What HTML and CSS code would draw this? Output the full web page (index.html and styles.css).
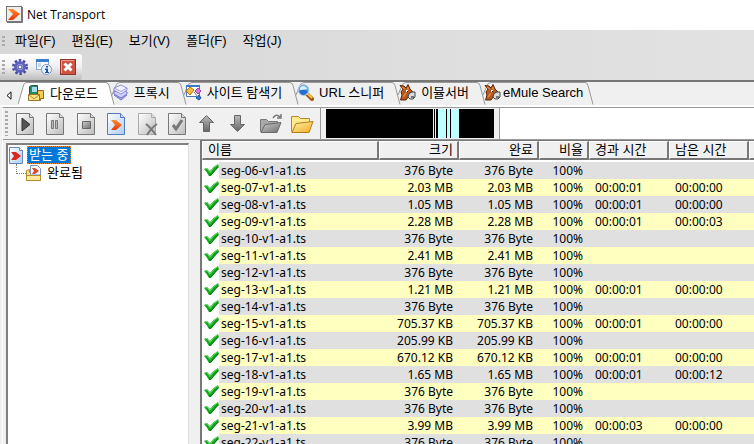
FILE: index.html
```
<!DOCTYPE html>
<html lang="ko">
<head>
<meta charset="utf-8">
<title>Net Transport</title>
<link rel="stylesheet" href="styles.css">
</head>
<body>
<svg class="defs" aria-hidden="true">
  <defs>
    <linearGradient id="pg" x1="0" y1="0" x2="1" y2="1"><stop offset="0" stop-color="#fff"/><stop offset="1" stop-color="#bcbcbc"/></linearGradient>
    <linearGradient id="pb" x1="0" y1="0" x2="1" y2="1"><stop offset="0" stop-color="#fff"/><stop offset="1" stop-color="#a9cdf8"/></linearGradient>
    <linearGradient id="dk" x1="0" y1="0" x2="0" y2="1"><stop offset="0" stop-color="#bbb"/><stop offset="1" stop-color="#666"/></linearGradient>
    <linearGradient id="or" x1="0" y1="0" x2="0" y2="1"><stop offset="0" stop-color="#ff8a2c"/><stop offset="1" stop-color="#e33a08"/></linearGradient>
    <linearGradient id="ye" x1="0" y1="0" x2="1" y2="1"><stop offset="0" stop-color="#fff3a8"/><stop offset="1" stop-color="#efad27"/></linearGradient>
    <linearGradient id="gy" x1="0" y1="0" x2="1" y2="1"><stop offset="0" stop-color="#ccc"/><stop offset="1" stop-color="#707070"/></linearGradient>
    <symbol id="page" viewBox="0 0 18 24"><path d="M.5 1.500h13l4 4v17H.5z" fill="url(#pg)" stroke="#777"/><path d="M13.500 1.500v4h4" fill="#ddd" stroke="#777"/></symbol>
    <symbol id="check" viewBox="0 0 15 14"><path d="M0 6q2-1 3-1l3 3q4-5 8-7l1 3q-5 4-8 9H5Q3 9 0 6z" fill="#10a71b"/><path d="M1 6l2-.5 3 4q4-6 8-8" fill="none" stroke="#66dc63"/><path d="M5 12h2l7-8" fill="none" stroke="#087b13"/></symbol>
    <symbol id="mule" viewBox="0 0 17 17"><path d="M1 1.500l4 .5 2 2 2-3.500 2 4.500 3 3v3l-4 1-3 4H1.500l1.500-5-1-3 2-3z" fill="#b5581f" stroke="#5a260d"/><path d="M3 3l3 2M4 13l3-4M9 3v3" stroke="#e58637" stroke-width="1.500"/><path d="M10 9.500l3-1.500h3v5l-2 2h-3l-2-2z" fill="#d9dde0" stroke="#444"/><path d="M7 6h2v2H7z" fill="#fff"/><path d="M8.500 7v1M12 13h3" stroke="#111"/></symbol>
    <symbol id="sep" viewBox="0 0 15 23"><path d="M0 .5q2 0 3 3l5 19M14 .5q-3 0-4 3L6 13" fill="none" stroke="#989898"/></symbol>
  </defs>
</svg>

<header class="title">
  <svg width="17" height="17" viewBox="0 0 17 17"><rect x=".5" y=".5" width="15" height="15" fill="#eee" stroke="#777"/><path d="M16.500 1v15.500H1" fill="none" stroke="#777"/><path d="M2 3h5l7 5-7 6H2l5-6z" fill="url(#or)"/></svg>
  <h1>Net Transport</h1>
</header>

<div class="bars">
  <nav class="menu">
    <span class="grip"></span>
    <button>파일(F)</button><button>편집(E)</button><button>보기(V)</button><button>폴더(F)</button><button>작업(J)</button>
  </nav>
  <div class="quick">
    <span class="grip"></span>
    <button aria-label="설정"><svg width="16" height="16" viewBox="0 0 16 16"><circle cx="8" cy="8" r="6.500" fill="none" stroke="#484ca5" stroke-width="3" stroke-dasharray="2.300 1.800"/><circle cx="8" cy="8" r="4.500" fill="#b9c0f2" stroke="#5d62bd" stroke-width="3"/><circle cx="8" cy="8" r="2" fill="#f3f3f3" stroke="#434799"/></svg></button>
    <button aria-label="정보"><svg width="16" height="16" viewBox="0 0 16 16"><rect x=".5" y=".5" width="12" height="10" fill="#f5f9ff" stroke="#87a5cb"/><path d="M0 0h13v3H0z" fill="#3c7fce"/><path d="M2 5h3M2 7h3" stroke="#9bb4d3"/><circle cx="10.500" cy="10.500" r="5" fill="#e9f3ff" stroke="#7997bd"/><path d="M10 7h2v1.500h-2zM9 9.500h3V13h1v1H9v-1h1v-2H9z" fill="#1550b4"/></svg></button>
    <button aria-label="닫기"><svg width="16" height="16" viewBox="0 0 16 16"><rect x=".5" y=".5" width="15" height="15" fill="#cf5341" stroke="#913326"/><path d="M1.500 14V1.500H14" fill="none" stroke="#ed9f92"/><path d="M4.500 4.500l7 7M11.500 4.500l-7 7" stroke="#fff" stroke-width="3"/></svg></button>
  </div>
</div>

<nav class="tabs">
  <button class="back" aria-label="이전 탭"><svg width="6" height="9" viewBox="0 0 6 9"><path d="M5 .8v7.400L1 4.500z" fill="#fff" stroke="#111"/></svg></button>
  <svg class="lead" width="8" height="23" viewBox="0 0 8 23"><path d="M0 22.500L5 5Q6 .5 8 .5V23H0z" fill="#fff"/><path d="M0 22.500L5 5Q6 .5 8 .5" fill="none" stroke="#989898"/></svg>
  <button class="tab active"><svg width="17" height="17" viewBox="0 0 17 17"><path d="M8.500 5.500h7v8h-3v2h-5z" fill="#f6c94e" stroke="#8e681d"/><path d="M1.500 1.500l2-1h6v9h-8z" fill="#278c59" stroke="#195e43"/><path d="M4 2h5v5H4z" fill="#a7d8ef"/><path d="M.5 9.500h11v6H.5z" fill="#fce184" stroke="#9a742c"/><path d="M1 10l5 4 5-4" fill="none" stroke="#b28931"/></svg>다운로드</button>
  <svg class="sep on" width="15" height="23" viewBox="0 0 15 23"><path d="M0 .5q2 0 3 3l5 19H0z" fill="#fff"/><use href="#sep"/></svg>
  <button class="tab"><svg width="16" height="17" viewBox="0 0 16 17"><path d="M1 11l7-3 6 3-6 5z" fill="#a9abe7" stroke="#7476c9"/><path d="M1 8l7-3 6 3v2l-6 4-7-4z" fill="#cfd0ff" stroke="#7779cd"/><path d="M1 4l7-3 6 3v2L8 10 1 6z" fill="#f2f2ff" stroke="#8e90d7"/><path d="M1 4l7 3.500L14 4" fill="none" stroke="#9b9dde"/></svg>프록시</button>
  <svg class="sep" width="15" height="23"><use href="#sep"/></svg>
  <button class="tab"><svg width="17" height="17" viewBox="0 0 17 17"><path d="M1.500 1.500h13v11h-13z" fill="#fff" stroke="#4776b7"/><path d="M1 1h14v2H1z" fill="#3b79ca"/><path d="M1 7l4-4 4 3-4 5z" fill="#f8bd38" stroke="#af7716"/><path d="M10 7l3-3 3 3-3 3z" fill="#de72df" stroke="#a542a9"/><path d="M11 14l3-3 2 3-2 2z" fill="#2f79cf" stroke="#1d55a0"/><path d="M9 8l4 5" stroke="#777"/></svg>사이트 탐색기</button>
  <svg class="sep" width="15" height="23"><use href="#sep"/></svg>
  <button class="tab"><svg width="17" height="17" viewBox="0 0 17 17"><path d="M10 10l5 5" stroke="#a15a0a" stroke-width="4" stroke-linecap="round"/><path d="M10 9l5 5" stroke="#ffc348" stroke-width="2"/><circle cx="6.500" cy="6" r="5.500" fill="#65a9ed" stroke="#bccbe2"/><path d="M3 6a3.500 3.500 0 0 1 3-4q3 0 4 3z" fill="#d8f2ff"/><path d="M2 7q4-2 9 0-2 4-5 4-3-1-4-4z" fill="#246cd0"/></svg>URL 스니퍼</button>
  <svg class="sep" width="15" height="23"><use href="#sep"/></svg>
  <button class="tab"><svg width="17" height="17"><use href="#mule"/></svg>이뮬서버</button>
  <svg class="sep" width="15" height="23"><use href="#sep"/></svg>
  <button class="tab last"><svg width="17" height="17"><use href="#mule"/></svg>eMule Search</button>
  <svg class="sep" width="15" height="23" viewBox="0 0 15 23"><path d="M0 .5q2 0 3 3l5 19" fill="none" stroke="#989898"/></svg>
</nav>

<main class="frame">
  <div class="tools">
    <div class="buttons">
      <span class="grip"></span>
      <button aria-label="시작"><svg width="18" height="24" viewBox="0 0 18 24"><use href="#page"/><path d="M6 6v13l8-6.500z" fill="#555" stroke="#333"/></svg></button>
      <button aria-label="일시 정지"><svg width="18" height="24" viewBox="0 0 18 24"><use href="#page"/><path d="M5.500 8.500h2v8h-2zM9.500 8.500h2v8h-2z" fill="#bbb" stroke="#777"/></svg></button>
      <button aria-label="정지"><svg width="18" height="24" viewBox="0 0 18 24"><use href="#page"/><path d="M5.500 9.500h8v7h-8z" fill="url(#gy)" stroke="#666"/></svg></button>
      <button aria-label="새 작업"><svg width="18" height="24" viewBox="0 0 18 24"><path d="M.5 1.500h13l4 4v17H.5z" fill="url(#pb)" stroke="#5579bd"/><path d="M13.500 1.500v4h4" fill="#c5dcff" stroke="#5579bd"/><path d="M4 8h5l6 5-6 5H4l4-5z" fill="url(#or)"/></svg></button>
      <button aria-label="삭제"><svg width="20" height="24" viewBox="0 0 20 24"><path d="M.5 1.500h13l4 4v17H.5z" fill="url(#pg)" stroke="#aaa"/><path d="M13.500 1.500v4h4" fill="#ddd" stroke="#aaa"/><path d="M8 12q4 3 10 11M19 12q-5 3-10 11" fill="none" stroke="#777" stroke-width="2"/></svg></button>
      <button aria-label="완료"><svg width="18" height="24" viewBox="0 0 18 24"><use href="#page"/><path d="M5 13l3 4 6-9" fill="none" stroke="#777" stroke-width="3"/></svg></button>
      <button aria-label="위로"><svg width="17" height="20" viewBox="0 0 17 20"><path d="M8.500 1.500l7 7h-4v9h-6v-9h-4z" fill="url(#dk)" stroke="#666"/></svg></button>
      <button aria-label="아래로"><svg width="17" height="20" viewBox="0 0 17 20"><path d="M8.500 17.500l7-7h-4v-9h-6v9h-4z" fill="url(#dk)" stroke="#666"/></svg></button>
      <button aria-label="폴더로 이동"><svg width="24" height="22" viewBox="0 0 24 22"><path d="M1.500 18.500v-12h6l2 2h9v10z" fill="#aaa" stroke="#777"/><path d="M2 19.500l4-8 16-2-4 10z" fill="url(#gy)" stroke="#696969"/><path d="M14 5q3-5 7-1M18 5h4V1" fill="none" stroke="#777" stroke-width="1.500"/></svg></button>
      <button aria-label="폴더 열기"><svg width="24" height="22" viewBox="0 0 24 22"><path d="M1.500 18.500V3.500h7l2 2h9v13z" fill="#ffe98e" stroke="#b98a29"/><path d="M2 19.500l4-9 17-2-4 11z" fill="url(#ye)" stroke="#b77c18"/></svg></button>
    </div>
    <svg class="graph" width="168" height="29" viewBox="0 0 168 29" shape-rendering="crispEdges" role="img" aria-label="전송 그래프"><path d="M0 0h168v29H0z"/><path d="M107 0h1v29h-1zM109 0h1v29h-1zM112 0h8v29h-8zM121 0h3v29h-3zM125 0h8v29h-8z" fill="#bfffff"/></svg>
  </div>

  <div class="work">
    <aside class="tree">
      <div class="node"><svg width="16" height="17" viewBox="0 0 16 17"><path d="M1.500.5h10l3 3v13h-13z" fill="url(#pb)" stroke="#6685bd"/><path d="M11.500.5v3h3" fill="#fff" stroke="#6685bd"/><path d="M3 5h5l5 4-5 4H3l3-4z" fill="#d92820"/></svg><button class="selected">받는 중</button></div>
      <div class="node child"><span class="branch"></span><svg width="16" height="17" viewBox="0 0 16 17"><path d="M.5 15.500v-10l3-1v3h11v8z" fill="#ffdd72" stroke="#b98a29"/><path d="M4.500 10V.5h7l3 3V10z" fill="#f4f8ff" stroke="#7895c5"/><path d="M6 3h3l4 3-4 3H6l2-3z" fill="#e34732"/><path d="M.5 15.500v-5h14v5z" fill="#ffe99a" stroke="#b98a29"/></svg><button>완료됨</button></div>
    </aside>
    <section class="list">
      <table>
        <colgroup><col class="c-name"><col class="c-size"><col class="c-size"><col class="c-rate"><col class="c-time"><col class="c-time"><col class="c-time"></colgroup>
        <thead><tr><th>이름</th><th class="n">크기</th><th class="n">완료</th><th class="n">비율</th><th>경과 시간</th><th>남은 시간</th><th></th></tr></thead>
        <tbody>
          <tr><td><div class="name"><svg><use href="#check"/></svg><span>seg-06-v1-a1.ts</span></div></td><td>376 Byte</td><td>376 Byte</td><td>100%</td><td></td><td></td><td></td></tr>
          <tr><td><div class="name"><svg><use href="#check"/></svg><span>seg-07-v1-a1.ts</span></div></td><td>2.03 MB</td><td>2.03 MB</td><td>100%</td><td>00:00:01</td><td>00:00:00</td><td></td></tr>
          <tr><td><div class="name"><svg><use href="#check"/></svg><span>seg-08-v1-a1.ts</span></div></td><td>1.05 MB</td><td>1.05 MB</td><td>100%</td><td>00:00:01</td><td>00:00:00</td><td></td></tr>
          <tr><td><div class="name"><svg><use href="#check"/></svg><span>seg-09-v1-a1.ts</span></div></td><td>2.28 MB</td><td>2.28 MB</td><td>100%</td><td>00:00:01</td><td>00:00:03</td><td></td></tr>
          <tr><td><div class="name"><svg><use href="#check"/></svg><span>seg-10-v1-a1.ts</span></div></td><td>376 Byte</td><td>376 Byte</td><td>100%</td><td></td><td></td><td></td></tr>
          <tr><td><div class="name"><svg><use href="#check"/></svg><span>seg-11-v1-a1.ts</span></div></td><td>2.41 MB</td><td>2.41 MB</td><td>100%</td><td></td><td></td><td></td></tr>
          <tr><td><div class="name"><svg><use href="#check"/></svg><span>seg-12-v1-a1.ts</span></div></td><td>376 Byte</td><td>376 Byte</td><td>100%</td><td></td><td></td><td></td></tr>
          <tr><td><div class="name"><svg><use href="#check"/></svg><span>seg-13-v1-a1.ts</span></div></td><td>1.21 MB</td><td>1.21 MB</td><td>100%</td><td>00:00:01</td><td>00:00:00</td><td></td></tr>
          <tr><td><div class="name"><svg><use href="#check"/></svg><span>seg-14-v1-a1.ts</span></div></td><td>376 Byte</td><td>376 Byte</td><td>100%</td><td></td><td></td><td></td></tr>
          <tr><td><div class="name"><svg><use href="#check"/></svg><span>seg-15-v1-a1.ts</span></div></td><td>705.37 KB</td><td>705.37 KB</td><td>100%</td><td>00:00:01</td><td>00:00:00</td><td></td></tr>
          <tr><td><div class="name"><svg><use href="#check"/></svg><span>seg-16-v1-a1.ts</span></div></td><td>205.99 KB</td><td>205.99 KB</td><td>100%</td><td></td><td></td><td></td></tr>
          <tr><td><div class="name"><svg><use href="#check"/></svg><span>seg-17-v1-a1.ts</span></div></td><td>670.12 KB</td><td>670.12 KB</td><td>100%</td><td>00:00:01</td><td>00:00:00</td><td></td></tr>
          <tr><td><div class="name"><svg><use href="#check"/></svg><span>seg-18-v1-a1.ts</span></div></td><td>1.65 MB</td><td>1.65 MB</td><td>100%</td><td>00:00:01</td><td>00:00:12</td><td></td></tr>
          <tr><td><div class="name"><svg><use href="#check"/></svg><span>seg-19-v1-a1.ts</span></div></td><td>376 Byte</td><td>376 Byte</td><td>100%</td><td></td><td></td><td></td></tr>
          <tr><td><div class="name"><svg><use href="#check"/></svg><span>seg-20-v1-a1.ts</span></div></td><td>376 Byte</td><td>376 Byte</td><td>100%</td><td></td><td></td><td></td></tr>
          <tr><td><div class="name"><svg><use href="#check"/></svg><span>seg-21-v1-a1.ts</span></div></td><td>3.99 MB</td><td>3.99 MB</td><td>100%</td><td>00:00:03</td><td>00:00:00</td><td></td></tr>
          <tr><td><div class="name"><svg><use href="#check"/></svg><span>seg-22-v1-a1.ts</span></div></td><td>376 Byte</td><td>376 Byte</td><td>100%</td><td></td><td></td><td></td></tr>
        </tbody>
      </table>
    </section>
  </div>
</main>
</body>
</html>
```
FILE: styles.css
```
* { box-sizing: border-box; }
body {
  margin: 0;
  height: 100vh;
  overflow: hidden;
  display: flex;
  flex-direction: column;
  background: #f0f0f0;
  color: #000;
  font: 13px/17px "Liberation Sans", "Noto Sans CJK KR", sans-serif;
}
button { font: inherit; color: inherit; background: none; border: 0; padding: 0; white-space: nowrap; }
svg { display: block; flex: none; }
.defs { position: absolute; width: 0; height: 0; }

.title { height: 30px; display: flex; align-items: center; gap: 4px; padding: 0 0 2px 6px; background: #fff; }
.title h1 { margin: 0; font: 12px/17px "Open Sans", "Noto Sans", sans-serif; }

.bars { flex: none; background: linear-gradient(90deg, #d8d8d8, #e2e2e2); border-bottom: 2px solid #777; }
.grip { flex: none; width: 3px; align-self: stretch; margin: 6px 0; background: repeating-linear-gradient(#aaa 0 2px, transparent 2px 4px); }
.menu { height: 24px; display: flex; align-items: center; padding: 0 0 4px 2px; }
.menu button { margin-right: 16px; }
.menu .grip { margin: 6px 10px 2px 0; }
.quick {
  width: 82px;
  height: 26px;
  display: flex;
  align-items: center;
  gap: 8px;
  padding-left: 2px;
  border-radius: 0 3px 3px 0;
  background: linear-gradient(#fff, #f0f0f0 50%, #bdbdbd);
}
.quick .grip { margin-right: -1px; }

.tabs { flex: none; height: 25px; display: flex; align-items: flex-end; padding-left: 6px; border-bottom: 2px solid #fff; overflow: hidden; }
.back { width: 12px; height: 20px; }
.tab {
  height: 23px;
  display: flex;
  align-items: center;
  gap: 5px;
  padding: 0 8px 2px 0;
  background: linear-gradient(#989898, #989898) 7px 0 / 100% 1px no-repeat;
}
.tab.active { padding-left: 2px; background: #fff; border-top: 1px solid #989898; }
.tab.last { gap: 2px; padding-right: 2px; }
.sep { margin-right: -8px; }

.frame { flex: 1; min-height: 0; display: flex; flex-direction: column; margin-left: 2px; border-top: 1px solid #999; border-left: 1px solid #fff; background: #f0f0f0; }
.tools { flex: none; height: 32px; display: flex; background: #fff; border-bottom: 1px solid #999; }
.buttons { display: flex; align-items: center; width: 318px; padding-left: 2px; background: #f0f0f0; border-right: 1px solid #999; }
.buttons .grip { margin: 3px 8px 3px 0; }
.buttons button { width: 31px; display: flex; align-items: center; }
.graph { box-sizing: content-box; padding: 1px 5px; background: #f0f0f0; border-right: 1px solid #999; }

.work { flex: 1; min-height: 0; display: flex; }
.tree { flex: none; width: 183px; margin: 3px 0 0 3px; padding: 1px 0 0 0; background: #fff; border: 1px solid #808080; border-width: 2px 1px 0 2px; border-right-color: #ddd; }
.node { display: flex; align-items: center; gap: 3px; height: 18px; }
.node button { height: 18px; padding: 0 2px; line-height: 16px; }
.node .selected { background: #0078d7; color: #fff; outline: 1px dotted #e68a2e; outline-offset: -1px; }
.branch { width: 10px; height: 10px; margin: 0 -3px 8px 8px; border: 1px dotted #808080; border-width: 0 0 1px 1px; }
.list { flex: 1; min-width: 0; overflow: hidden; margin-left: 11px; background: #fff; border-left: 2px solid #777; border-top: 1px solid #777; }
table { width: 627px; table-layout: fixed; border-collapse: separate; border-spacing: 0; font-size: 12px; }
.c-name { width: 177px; }
.c-size, .c-time { width: 80px; }
.c-rate { width: 50px; }
th {
  height: 19px;
  padding: 0 4px 0 5px;
  font-weight: 400;
  font-size: 13px;
  text-align: left;
  line-height: 16px;
  background: #f0f0f0;
  border: 1px solid #fff;
  border-right: 2px solid #777;
  border-bottom: 2px solid #777;
}
th.n { text-align: right; }
tbody::before { content: ""; display: block; height: 2px; }
td { height: 17px; padding: 0 6px; font: 12px/17px "Noto Sans", sans-serif; white-space: nowrap; text-align: right; }
td:first-child { padding: 0; }
td:nth-child(n+5) { text-align: left; }
tbody tr:nth-child(odd) { background: #e0e0e0; }
tbody tr:nth-child(even) { background: #ffffc0; }
.name { display: flex; height: 17px; }
.name svg { box-sizing: content-box; width: 15px; height: 14px; padding: 1px 0 2px 2px; background: #fff; }
.name span { padding-left: 2px; }
```
